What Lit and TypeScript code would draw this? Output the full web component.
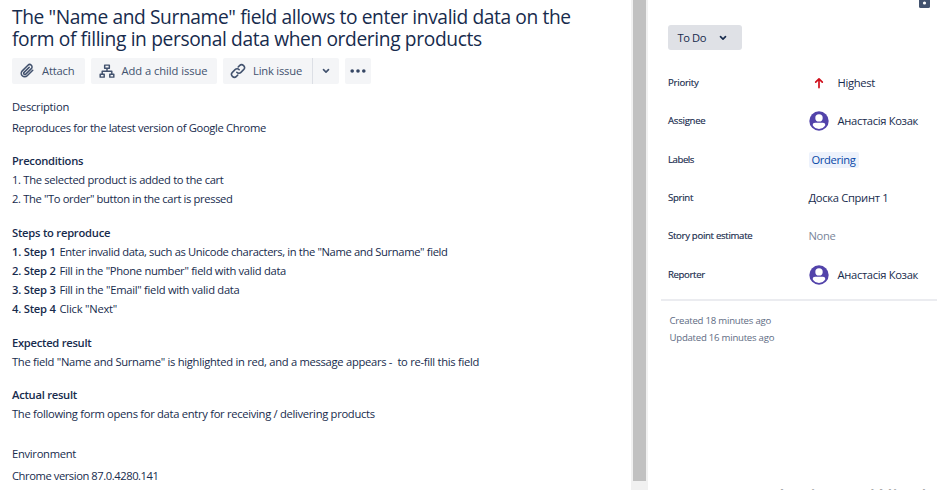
import { LitElement, html, svg, css, nothing } from "lit";
import { customElement, property } from "lit/decorators.js";
import { styleMap } from "lit/directives/style-map.js";

interface Line {
  text: string;
  lead?: string;
  track: number;
  kind?: "strong" | "heading";
}

const BLOCKS: { name: string; lines: Line[] }[] = [
  {
    name: "description",
    lines: [
      { text: "Description", track: -0.249, kind: "heading" },
      { text: "Reproduces for the latest version of Google Chrome", track: -0.33 },
    ],
  },
  {
    name: "preconditions",
    lines: [
      { text: "Preconditions", track: -0.27, kind: "strong" },
      { text: "1. The selected product is added to the cart", track: -0.317 },
      { text: '2. The "To order" button in the cart is pressed', track: -0.361 },
    ],
  },
  {
    name: "steps",
    lines: [
      { text: "Steps to reproduce", track: -0.24, kind: "strong" },
      { lead: "1. Step 1", text: 'Enter invalid data, such as Unicode characters, in the "Name and Surname" field', track: -0.359 },
      { lead: "2. Step 2", text: 'Fill in the "Phone number" field with valid data', track: -0.3 },
      { lead: "3. Step 3", text: 'Fill in the "Email" field with valid data', track: -0.273 },
      { lead: "4. Step 4", text: 'Click "Next"', track: -0.23 },
    ],
  },
  {
    name: "expected",
    lines: [
      { text: "Expected result", track: -0.27, kind: "strong" },
      { text: 'The field "Name and Surname" is highlighted in red, and a message appears -  to re-fill this field', track: -0.287 },
    ],
  },
  {
    name: "actual",
    lines: [
      { text: "Actual result", track: -0.26, kind: "strong" },
      { text: "The following form opens for data entry for receiving / delivering products", track: -0.297 },
    ],
  },
  {
    name: "environment",
    lines: [
      { text: "Environment", track: -0.286, kind: "heading" },
      { text: "Chrome version 87.0.4280.141", track: -0.433 },
    ],
  },
];

interface Field {
  label: string;
  labelTrack: number;
  value: string;
  track: number;
  kind?: "priority" | "person" | "tag" | "empty";
}

const FIELDS: Field[] = [
  { label: "Priority", labelTrack: -0.244, value: "Highest", track: -0.301, kind: "priority" },
  { label: "Assignee", labelTrack: -0.25, value: "Анастасія Козак", track: -0.33, kind: "person" },
  { label: "Labels", labelTrack: -0.432, value: "Ordering", track: -0.342, kind: "tag" },
  { label: "Sprint", labelTrack: -0.296, value: "Доска Спринт 1", track: -0.32 },
  { label: "Story point estimate", labelTrack: -0.3, value: "None", track: -0.324, kind: "empty" },
  { label: "Reporter", labelTrack: -0.36, value: "Анастасія Козак", track: -0.33, kind: "person" },
];

const spacing = (px: number) => styleMap({ letterSpacing: `${px}px` });

const stroke = (d: string, width = 2) =>
  svg`<path d=${d} fill="none" stroke="currentColor" stroke-width=${width} stroke-linecap="round" stroke-linejoin="round"/>`;

const clip = html`<svg class="icon" viewBox="0 0 24 24">
  ${stroke("M20.6 10.9l-8.3 8.3a5.2 5.2 0 0 1-7.4-7.4l8.5-8.5a3.6 3.6 0 0 1 5.1 5.1l-8.3 8.3a1.8 1.8 0 0 1-2.6-2.6l7.6-7.5", 2.3)}
</svg>`;

const tree = html`<svg class="icon" viewBox="0 0 24 24">
  ${stroke("M8.5 3.2h7v4.6h-7zM1.8 17h6v4.2h-6zM16.2 17h6v4.2h-6zM12 8v4.5M4.8 16.5v-4h14.4v4", 2.2)}
</svg>`;

const link = html`<svg class="icon" viewBox="0 0 24 24">
  ${stroke("M10.2 13.8a4.3 4.3 0 0 0 6.2.2l4-4a4.3 4.3 0 0 0-6.1-6.1l-2 2M13.8 10.2a4.3 4.3 0 0 0-6.2-.2l-4 4a4.3 4.3 0 0 0 6.1 6.1l2-2", 2.3)}
</svg>`;

const chevron = html`<svg class="chevron" viewBox="0 0 8 6">${stroke("M1.5 1.6L4 4.1l2.5-2.5", 1.6)}</svg>`;

const arrowUp = html`<svg class="arrow" viewBox="0 0 10 12">${stroke("M5 10.6V2M1.7 5.2L5 1.8l3.3 3.4", 1.7)}</svg>`;

const avatar = html`<svg class="avatar" viewBox="0 0 20 20">
  <circle cx="10" cy="10" r="9.7" fill="#5243aa" />
  <circle cx="10" cy="6.9" r="3.7" fill="#fff" />
  <path d="M3.700 14.300c0-1.700.9-2.500 2.400-2.500h7.800c1.500 0 2.400.8 2.400 2.500-1.300 2.200-3.600 3.600-6.300 3.600s-5-1.400-6.300-3.600z" fill="#fff" />
</svg>`;

@customElement("issue-body")
class IssueBody extends LitElement {
  static styles = css`
    :host { display: block; padding-top: 5.5px; }
    h1 { margin: 0; font-size: 19.2px; font-weight: 500; line-height: 22px; color: #172b4d; }
    h1 span { display: block; white-space: nowrap; }
    .toolbar { display: flex; gap: 6px; margin-top: 8.5px; height: 26px; color: #42526e; }
    .button, .split { display: flex; align-items: center; height: 26px; background: #f4f5f7; border-radius: 2px; }
    .button { box-sizing: border-box; padding-left: 7px; gap: 7px; white-space: nowrap; }
    .attach { width: 73px; }
    .child { width: 126px; padding-left: 8px; gap: 6.5px; }
    .link { width: 89px; background: none; }
    .more { width: 26px; padding: 0; justify-content: center; }
    .toggle { display: flex; align-items: center; justify-content: center; width: 26px; height: 26px; border-left: 1px solid #dcdfe5; }
    .icon { width: 16px; height: 16px; flex: none; }
    .chevron { width: 8px; height: 6px; }
    .dots { width: 16px; height: 4px; fill: #344563; }
    .block { color: #172b4d; margin-top: 14px; }
    .line { height: 19px; line-height: 19px; white-space: pre; }
    .strong, b { font-weight: 600; }
    b { display: inline-block; width: 47.5px; letter-spacing: -0.22px; }
    .description { margin-top: 13px; }
    .description .heading { margin-bottom: 2px; }
    .steps, .expected { margin-top: 15px; }
    .environment { margin-top: 21px; }
    .environment .heading { margin-bottom: 3px; }
  `;
  render() {
    return html`
      <h1>
        <span style=${spacing(-0.395)}>The "Name and Surname" field allows to enter invalid data on the</span>
        <span style=${spacing(-0.37)}>form of filling in personal data when ordering products</span>
      </h1>
      <div class="toolbar">
        <div class="button attach">${clip}<span style=${spacing(-0.164)}>Attach</span></div>
        <div class="button child">${tree}<span style=${spacing(-0.061)}>Add a child issue</span></div>
        <div class="split">
          <div class="button link">${link}<span style=${spacing(-0.194)}>Link issue</span></div>
          <div class="toggle">${chevron}</div>
        </div>
        <div class="button more">
          <svg class="dots" viewBox="0 0 16 4"><circle cx="2.2" cy="2" r="1.8" /><circle cx="8" cy="2" r="1.8" /><circle cx="13.8" cy="2" r="1.8" /></svg>
        </div>
      </div>
      ${BLOCKS.map(
        (block) => html`<section class="block ${block.name}">
          ${block.lines.map(
            (l) => html`<div class="line ${l.kind ?? ""}">${l.lead ? html`<b>${l.lead}</b>` : nothing}<span style=${spacing(l.track)}>${l.text}</span></div>`
          )}
        </section>`
      )}
    `;
  }
}

@customElement("issue-field")
class IssueField extends LitElement {
  @property({ attribute: false }) field!: Field;
  static styles = css`
    :host { display: flex; align-items: center; height: 38.4px; color: #172b4d; white-space: nowrap; }
    .label { width: 140.5px; font-size: 9.6px; color: #172b4d; -webkit-text-stroke: 0.15px #172b4d; }
    .value { display: flex; align-items: center; }
    .lead { width: 29px; display: flex; }
    .arrow { width: 10px; height: 12px; margin-left: 5.5px; color: #d0101c; }
    .avatar { width: 20px; height: 20px; margin-left: 0.5px; }
    .tag .text { color: #0747a6; background: #edf2fc; padding: 0 3px; line-height: 16px; border-radius: 2px; }
    .empty { color: #7a869a; }
  `;
  render() {
    const { label, labelTrack, value, track, kind } = this.field;
    return html`
      <div class="label" style=${spacing(labelTrack)}>${label}</div>
      <div class="value ${kind ?? ""}">
        ${kind === "priority" ? html`<span class="lead">${arrowUp}</span>` : nothing}
        ${kind === "person" ? html`<span class="lead">${avatar}</span>` : nothing}
        <span class="text" style=${spacing(track)}>${value}</span>
      </div>
    `;
  }
}

@customElement("app-root")
class AppRoot extends LitElement {
  static styles = css`
    :host {
      display: grid;
      grid-template-columns: 631px 17px 1fr;
      position: relative;
      height: 490px;
      overflow: hidden;
      background: #fff;
      font: 11.2px/16px "Open Sans", "Noto Sans", sans-serif;
    }
    issue-body { padding-left: 12px; height: 490px; box-sizing: border-box; overflow: hidden; }
    .scroll { background: #f1f1f1; padding: 0 2px 0 2px; }
    .thumb { height: 481px; background: #c1c1c1; }
    .side { padding-left: 20px; }
    .status {
      display: flex; align-items: center; box-sizing: border-box; gap: 12.5px;
      width: 74px; height: 25px; margin-top: 25px; padding-left: 9.5px;
      background: #dfe1e6; border-radius: 3px; color: #172b4d; white-space: nowrap;
    }
    .chevron { width: 8px; height: 6px; }
    .fields { margin-top: 13.6px; }
    .rule { margin: 5.4px 0 0 -7px; height: 2px; background: #ebecf0; }
    .dates { margin: 10.4px 0 0 1.5px; font-size: 9.6px; line-height: 17px; color: #5e6c84; }
    .lock { position: absolute; left: 919px; top: 0; width: 11px; height: 8px; }
    .watermark {
      position: absolute; left: 775px; top: 484px; font-size: 22px; line-height: 24px;
      color: #ababab; white-space: nowrap; letter-spacing: 1px;
    }
  `;
  render() {
    return html`
      <issue-body></issue-body>
      <div class="scroll"><div class="thumb"></div></div>
      <aside class="side">
        <div class="status"><span style=${spacing(-0.429)}>To Do</span>${chevron}</div>
        <div class="fields">${FIELDS.map((f) => html`<issue-field .field=${f}></issue-field>`)}</div>
        <div class="rule"></div>
        <div class="dates">
          <div style=${spacing(-0.23)}>Created 18 minutes ago</div>
          <div style=${spacing(-0.24)}>Updated 16 minutes ago</div>
        </div>
      </aside>
      <svg class="lock" viewBox="0 0 11 8"><path d="M0 0h11v6.5a1.5 1.5 0 0 1-1.5 1.5h-8A1.5 1.5 0 0 1 0 6.500z" fill="#42526e" /><circle cx="5.500" cy="3" r="1.600" fill="#fff" /></svg>
      <div class="watermark">Activate Windows</div>
    `;
  }
}
